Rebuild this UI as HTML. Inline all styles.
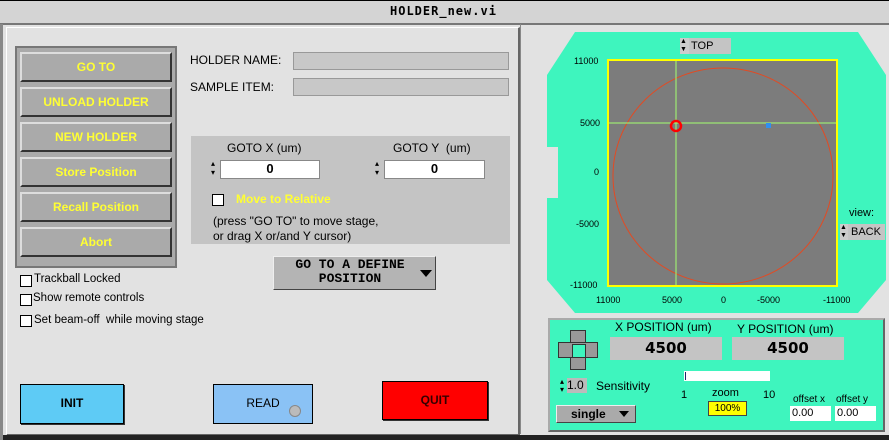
<!DOCTYPE html>
<html><head><style>
body{margin:0;width:889px;height:440px;background:#e2e2e2;font-family:"Liberation Sans",sans-serif;position:relative;overflow:hidden}
.a{position:absolute}
.btn{position:absolute;left:20px;width:152px;height:30px;background:#aaa;border:2px solid;border-color:#ddd #333 #333 #ddd;box-sizing:border-box;color:#ff3;font-weight:bold;font-size:12px;text-align:center;line-height:26px}
.cb{position:absolute;width:10px;height:10px;border:1px solid #000;background:#fff}
.t{position:absolute;font-size:12px;color:#000;white-space:nowrap}
.field{position:absolute;background:#fff;border:1px solid #888;font-weight:bold;font-size:13px;text-align:center}
.ax{position:absolute;font-size:9px;color:#000}
</style></head><body>
<div class="a" style="left:0;top:0;width:889px;height:22px;background:#d4d4d4;border-bottom:2px solid #777;border-top:1px solid #000"></div>
<div class="t" style="left:390px;top:4px;font-family:'DejaVu Sans Mono',monospace;font-weight:bold;font-size:12px;letter-spacing:1px">HOLDER_new.vi</div>
<div class="a" style="left:6px;top:27px;width:511px;height:406px;border:1px solid #fff;border-right:2px solid #666;border-bottom:2px solid #666"></div>
<div class="a" style="left:0;top:435px;width:889px;height:5px;background:#222"></div>
<div class="a" style="left:0;top:24px;width:3px;height:416px;background:#888"></div>
<div class="a" style="left:15px;top:46px;width:162px;height:222px;border:2px solid #777;background:#aaa;box-sizing:border-box"></div>
<div class="btn" style="top:52px">GO TO</div>
<div class="btn" style="top:87px">UNLOAD HOLDER</div>
<div class="btn" style="top:122px">NEW HOLDER</div>
<div class="btn" style="top:157px">Store Position</div>
<div class="btn" style="top:192px">Recall Position</div>
<div class="btn" style="top:227px">Abort</div>
<div class="t" style="left:190px;top:53px">HOLDER NAME:</div>
<div class="t" style="left:190px;top:80px">SAMPLE ITEM:</div>
<div class="a" style="left:293px;top:52px;width:214px;height:16px;background:#c8c8c8;border:1px solid #999"></div>
<div class="a" style="left:293px;top:78px;width:214px;height:16px;background:#c8c8c8;border:1px solid #999"></div>
<div class="a" style="left:191px;top:136px;width:319px;height:108px;background:#c4c4c4"></div>
<div class="t" style="left:227px;top:141px">GOTO X (um)</div>
<div class="t" style="left:393px;top:141px">GOTO Y&nbsp; (um)</div>
<div class="t" style="left:211px;top:159px;font-size:8px;line-height:9px">▴<br>▾</div>
<div class="field" style="left:220px;top:160px;width:98px;height:17px">0</div>
<div class="t" style="left:375px;top:159px;font-size:8px;line-height:9px">▴<br>▾</div>
<div class="field" style="left:384px;top:160px;width:99px;height:17px">0</div>
<div class="cb" style="left:212px;top:194px"></div>
<div class="t" style="left:236px;top:192px;color:#ff3;font-weight:bold">Move to Relative</div>
<div class="t" style="left:213px;top:214px">(press "GO TO" to move stage,</div>
<div class="t" style="left:213px;top:229px">or drag X or/and Y cursor)</div>
<div class="a" style="left:273px;top:256px;width:163px;height:34px;background:#b4b4b4;border:1px solid;border-color:#eee #444 #444 #eee;box-sizing:border-box"></div>
<div class="t" style="left:280px;top:258px;font-family:'Liberation Mono',monospace;font-weight:bold;font-size:13px;text-align:center;width:140px;line-height:14px">GO TO A DEFINE<br>POSITION</div>
<div class="a" style="left:420px;top:270px;border-left:6px solid transparent;border-right:6px solid transparent;border-top:7px solid #000"></div>
<div class="cb" style="left:20px;top:275px"></div><div class="t" style="left:34px;top:273px;font-size:11.5px">Trackball Locked</div>
<div class="cb" style="left:20px;top:294px"></div><div class="t" style="left:33px;top:292px;font-size:11.5px">Show remote controls</div>
<div class="cb" style="left:20px;top:315px"></div><div class="t" style="left:34px;top:314px;font-size:11.5px">Set beam-off&nbsp; while moving stage</div>
<div class="a" style="left:20px;top:384px;width:102px;height:38px;background:#5ecbf5;border:1px solid #000;box-shadow:1px 1px 0 #333"></div>
<div class="t" style="left:20px;top:396px;width:104px;text-align:center;font-weight:bold;font-size:12px">INIT</div>
<div class="a" style="left:213px;top:384px;width:98px;height:38px;background:#8ac2f5;border:1px solid #000"></div>
<div class="t" style="left:213px;top:396px;width:100px;text-align:center;font-size:12px">READ</div>
<div class="a" style="left:289px;top:405px;width:10px;height:10px;border-radius:50%;background:#bbb;border:1px solid #888"></div>
<div class="a" style="left:382px;top:381px;width:104px;height:37px;background:#f00;border:1px solid #000;box-shadow:1px 1px 0 #333"></div>
<div class="t" style="left:382px;top:393px;width:106px;text-align:center;font-weight:bold;font-size:12px;color:#300">QUIT</div>
<div class="a" style="left:520px;top:24px;width:1px;height:410px;background:#888"></div>
<svg class="a" style="left:540px;top:30px" width="349" height="285">
<polygon points="35,2 318,2 346,45 346,250 318,283 35,283 7,250 7,168 18,168 18,117 7,117 7,45" fill="#3ef5be"/>
<rect x="68" y="30" width="229" height="226" fill="#7c7c7c" stroke="#ff0" stroke-width="2"/>
<ellipse cx="183" cy="146" rx="110" ry="108" fill="none" stroke="#e34a22" stroke-width="1"/>
<line x1="69" y1="93" x2="296" y2="93" stroke="#a4ff70" stroke-width="1"/>
<line x1="136" y1="31" x2="136" y2="255" stroke="#a4ff70" stroke-width="1"/>
<circle cx="136" cy="96" r="5" fill="none" stroke="#f00" stroke-width="2.5"/>
<rect x="226" y="93" width="5" height="5" fill="#3090f0"/>
</svg>
<div class="a" style="left:680px;top:38px;width:10px;height:16px;background:#ccc;font-size:7px;line-height:8px">▲<br>▼</div>
<div class="a" style="left:689px;top:38px;width:42px;height:16px;background:#c4c4c4;font-size:11px;line-height:16px;padding-left:2px;box-sizing:border-box">TOP</div>
<div class="t" style="left:849px;top:207px;font-size:11px">view:</div>
<div class="a" style="left:840px;top:224px;width:8px;height:16px;background:#ccc;font-size:7px;line-height:8px">▲<br>▼</div>
<div class="a" style="left:848px;top:224px;width:37px;height:16px;background:#c4c4c4;font-size:11px;line-height:16px;padding-left:3px;box-sizing:border-box">BACK</div>
<div class="ax" style="left:574px;top:56px">11000</div>
<div class="ax" style="left:580px;top:118px">5000</div>
<div class="ax" style="left:594px;top:167px">0</div>
<div class="ax" style="left:576px;top:219px">-5000</div>
<div class="ax" style="left:570px;top:280px">-11000</div>
<div class="ax" style="left:596px;top:295px">11000</div>
<div class="ax" style="left:662px;top:295px">5000</div>
<div class="ax" style="left:721px;top:295px">0</div>
<div class="ax" style="left:757px;top:295px">-5000</div>
<div class="ax" style="left:823px;top:295px">-11000</div>
<div class="a" style="left:548px;top:318px;width:337px;height:114px;background:#3ef5be;border:2px solid;border-color:#aaa #666 #666 #aaa;box-sizing:border-box"></div>
<div class="a" style="left:570px;top:330px;width:14px;height:38px;background:#999;border:1px solid #333"></div>
<div class="a" style="left:558px;top:342px;width:38px;height:14px;background:#999;border:1px solid #333"></div>
<div class="a" style="left:572px;top:344px;width:12px;height:12px;background:#3ef5be;border:1px solid #333"></div>
<div class="t" style="left:615px;top:320px;font-size:12px">X POSITION (um)</div>
<div class="t" style="left:737px;top:322px;font-size:12px">Y POSITION (um)</div>
<div class="a" style="left:610px;top:337px;width:112px;height:23px;background:#c4c4c4;text-align:center;font-weight:bold;font-size:15px;line-height:23px;font-family:'DejaVu Sans',sans-serif">4500</div>
<div class="a" style="left:732px;top:337px;width:112px;height:23px;background:#c4c4c4;text-align:center;font-weight:bold;font-size:15px;line-height:23px;font-family:'DejaVu Sans',sans-serif">4500</div>
<div class="t" style="left:560px;top:378px;font-size:8px;line-height:8px">▴<br>▾</div>
<div class="a" style="left:567px;top:378px;width:20px;height:15px;background:#bbb;font-size:12px;line-height:15px">1.0</div>
<div class="t" style="left:596px;top:379px;font-size:12px">Sensitivity</div>
<div class="a" style="left:556px;top:405px;width:80px;height:18px;background:#aaa;border:1px solid;border-color:#eee #444 #444 #eee;box-sizing:border-box;font-weight:bold;font-size:12px;line-height:16px;padding-left:14px">single</div>
<div class="a" style="left:619px;top:411px;border-left:5px solid transparent;border-right:5px solid transparent;border-top:6px solid #000"></div>
<div class="a" style="left:684px;top:371px;width:86px;height:10px;background:#fff"></div>
<div class="a" style="left:685px;top:372px;width:1px;height:8px;background:#226"></div>
<div class="t" style="left:681px;top:389px;font-size:11px">1</div>
<div class="t" style="left:712px;top:387px;font-size:11px">zoom</div>
<div class="t" style="left:763px;top:389px;font-size:11px">10</div>
<div class="a" style="left:708px;top:401px;width:37px;height:13px;background:#ff0;border:1px solid #444;font-size:10px;text-align:center;line-height:13px">100%</div>
<div class="t" style="left:793px;top:394px;font-size:10px">offset x</div>
<div class="t" style="left:836px;top:394px;font-size:10px">offset y</div>
<div class="a" style="left:790px;top:406px;width:41px;height:15px;background:#fff;font-size:11px;line-height:15px;padding-left:2px;box-sizing:border-box">0.00</div>
<div class="a" style="left:835px;top:406px;width:41px;height:15px;background:#fff;font-size:11px;line-height:15px;padding-left:2px;box-sizing:border-box">0.00</div>
</body></html>
